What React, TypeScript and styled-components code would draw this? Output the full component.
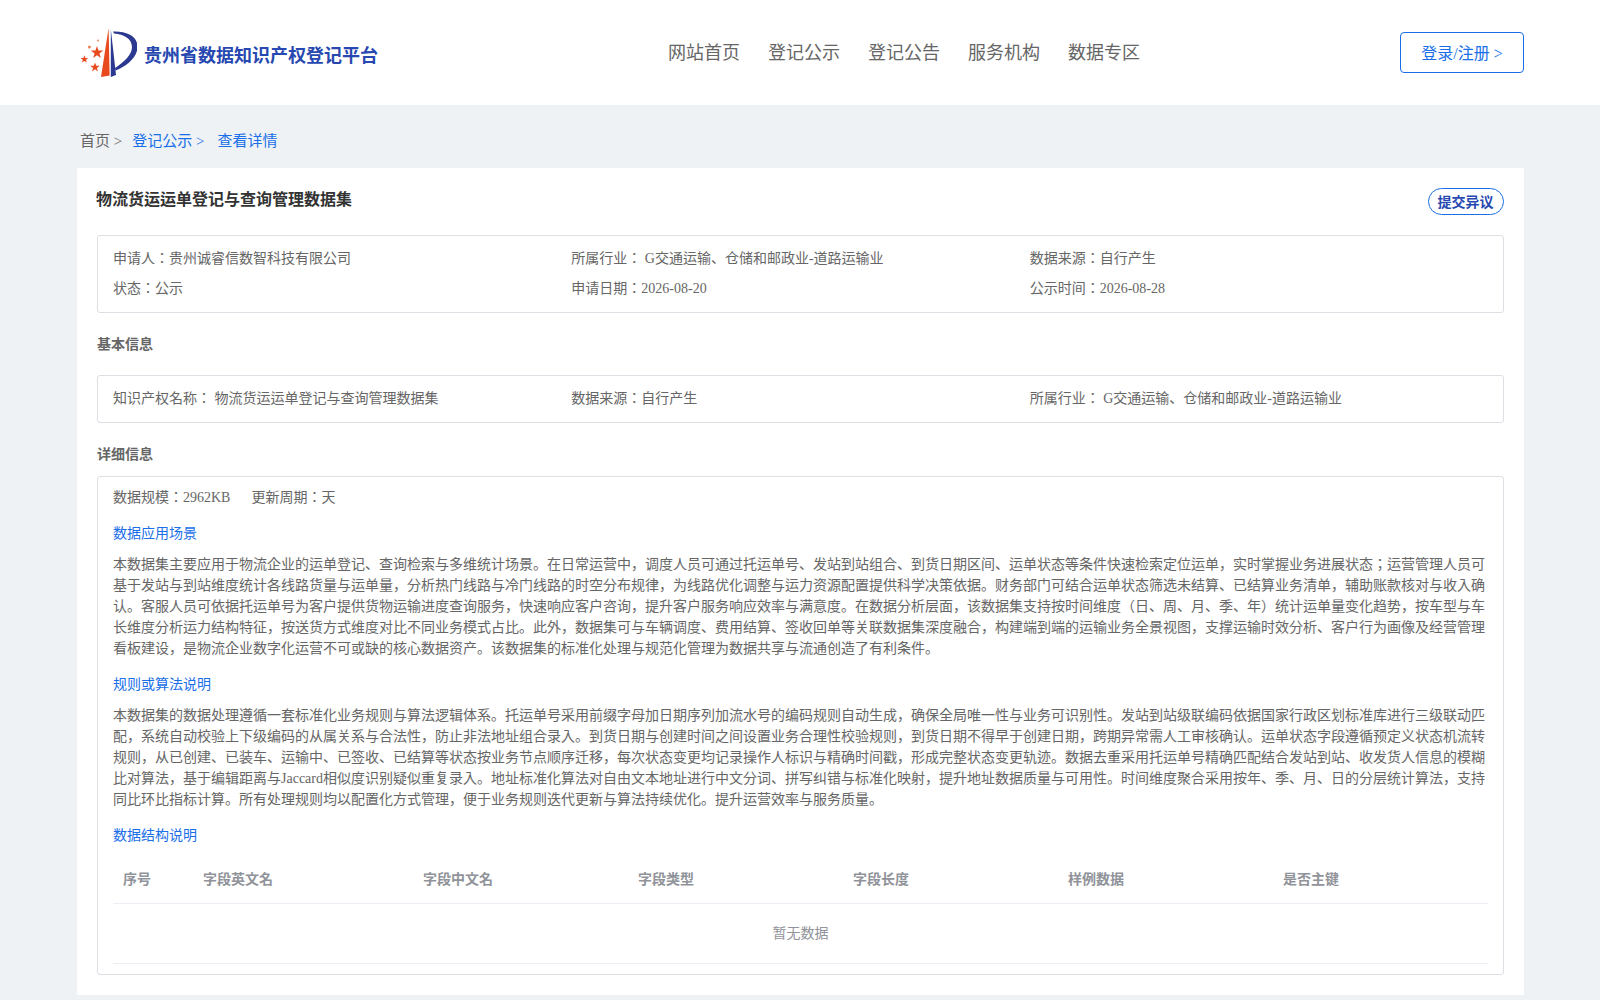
import React from 'react';
import styled, { createGlobalStyle } from 'styled-components';

const GlobalStyle = createGlobalStyle`
  html, body {
    margin: 0;
    padding: 0;
    background: #eef2f5;
    font-family: "Liberation Serif", "Noto Sans CJK JP", serif;
    color: #666;
  }
  * {
    box-sizing: border-box;
  }
`;

const Page = styled.div`
  width: 1600px;
  height: 1000px;
  overflow: hidden;
`;

const Header = styled.header`
  height: 105px;
  background: #fff;
  padding: 0 76px 0 81px;
  display: grid;
  grid-template-columns: 586px 1fr auto;
  align-items: center;
`;

const Brand = styled.div`
  display: flex;
  align-items: center;
  gap: 7px;
`;

const BrandName = styled.div`
  font-size: 18px;
  font-weight: 700;
  color: #2748b0;
  margin-top: 3px;
`;

const Nav = styled.nav`
  display: flex;
  gap: 28px;
  font-size: 18px;
  color: #666;
  margin: 0 0 4px 1px;
`;

const LoginButton = styled.button`
  justify-self: end;
  width: 124px;
  height: 41px;
  padding: 0 0 2px;
  font: inherit;
  font-size: 16px;
  color: #1a6fe8;
  background: #fff;
  border: 1px solid #1a6fe8;
  border-radius: 4px;
`;

const Crumbs = styled.div`
  height: 63px;
  padding: 27px 0 0 80px;
  font-size: 15px;
  line-height: 18px;
  display: flex;
`;

const Crumb = styled.span<{ $active?: boolean; $gap: number }>`
  color: ${p => (p.$active ? '#1a6fe8' : '#666')};
  margin-right: ${p => p.$gap}px;
`;

const Card = styled.main`
  width: 1447px;
  height: 827px;
  margin-left: 77px;
  background: #fff;
  padding: 20px;
`;

const TitleRow = styled.div`
  display: flex;
  justify-content: space-between;
  align-items: flex-start;
  height: 47px;
`;

const Title = styled.h1`
  margin: 0 0 0 -1px;
  font-size: 16px;
  line-height: 24px;
  font-weight: 700;
  color: #333;
`;

const ObjectionButton = styled.button`
  width: 76px;
  height: 27px;
  padding: 0 1px 1px 0;
  font: inherit;
  font-size: 14px;
  font-weight: 700;
  color: #2748b0;
  background: #fff;
  border: 1px solid #1a6fe8;
  border-radius: 14px;
`;

const InfoBox = styled.section`
  border: 1px solid #dcdfe3;
  border-radius: 3px;
  padding: 8px 15px;
  display: grid;
  grid-template-columns: repeat(3, 1fr);
  font-size: 14px;
  line-height: 30px;
`;

const SectionTitle = styled.h2<{ $height: number }>`
  margin: 0;
  height: ${p => p.$height}px;
  padding-top: 21px;
  font-size: 14px;
  line-height: 22px;
  font-weight: 700;
  color: #666;
`;

const DetailBox = styled.section`
  border: 1px solid #dcdfe3;
  border-radius: 3px;
  padding: 10px 15px 10px;
  font-size: 14px;
`;

const Stats = styled.div`
  display: flex;
  gap: 21px;
  line-height: 21px;
`;

const SubTitle = styled.h3`
  margin: 15px 0 10px;
  font-size: 14px;
  line-height: 21px;
  font-weight: 400;
  color: #1a6fe8;
`;

const Paragraph = styled.p`
  margin: 0;
  font-size: 14px;
  line-height: 21px;
  color: #666;
`;

const TableHead = styled.div`
  display: grid;
  grid-template-columns: 80px 220px repeat(5, 1fr);
  height: 51px;
  margin-top: -3px;
  align-items: center;
  border-bottom: 1px solid #ebeef5;
  font-weight: 700;
  color: #909399;
`;

const HeadCell = styled.div`
  padding-left: 10px;
`;

const EmptyRow = styled.div`
  height: 60px;
  line-height: 60px;
  text-align: center;
  color: #909399;
  border-bottom: 1px solid #ebeef5;
`;

const Logo = () => (
  <svg width="56" height="50" viewBox="0 0 56 50">
    <path d="M27.6 0 L20 49 L28.6 47.6 Z" fill="#e8491d" />
    <path d="M29.8 1 L29.8 49 L35 47 Z" fill="#2b3990" />
    <path
      d="M32 3.5 C46 3 56 8 56.5 18 C57 29 46 38 34.6 42.5 L34 40 C43 34 51 27 51 19 C51 11 43 6 33 5.5 Z"
      fill="#2b3990"
    />
    <polygon points="16,18 17.5,22.6 22.2,22.6 18.4,25.5 19.8,30 16,27.2 12.2,30 13.6,25.5 9.8,22.6 14.5,22.6" fill="#e8491d" />
    <polygon points="3.4,27.2 4.4,30 7.3,30 5,31.8 5.8,34.6 3.4,32.9 1,34.6 1.8,31.8 -0.5,30 2.4,30" fill="#e8491d" />
    <polygon points="14,34.4 15.2,37.8 18.8,37.8 15.9,40 17,43.4 14,41.3 11,43.4 12.1,40 9.2,37.8 12.8,37.8" fill="#e8491d" />
    <circle cx="8.4" cy="19" r="1.6" fill="#ef8a5f" />
    <circle cx="17" cy="12.4" r="1" fill="#ef8a5f" />
  </svg>
);

const navItems = ['网站首页', '登记公示', '登记公告', '服务机构', '数据专区'];
const columns = ['序号', '字段英文名', '字段中文名', '字段类型', '字段长度', '样例数据', '是否主键'];

const App: React.FC = () => {
  return (
    <Page>
      <GlobalStyle />
      <Header>
        <Brand>
          <Logo />
          <BrandName>贵州省数据知识产权登记平台</BrandName>
        </Brand>
        <Nav>
          {navItems.map(item => (
            <span key={item}>{item}</span>
          ))}
        </Nav>
        <LoginButton>登录/注册 &gt;</LoginButton>
      </Header>
      <Crumbs>
        <Crumb $gap={10}>首页 &gt;</Crumb>
        <Crumb $active $gap={13}>登记公示 &gt;</Crumb>
        <Crumb $active $gap={0}>查看详情</Crumb>
      </Crumbs>
      <Card>
        <TitleRow>
          <Title>物流货运运单登记与查询管理数据集</Title>
          <ObjectionButton>提交异议</ObjectionButton>
        </TitleRow>
        <InfoBox>
          <div>申请人：贵州诚睿信数智科技有限公司</div>
          <div>所属行业： G交通运输、仓储和邮政业-道路运输业</div>
          <div>数据来源：自行产生</div>
          <div>状态：公示</div>
          <div>申请日期：2026-08-20</div>
          <div>公示时间：2026-08-28</div>
        </InfoBox>
        <SectionTitle $height={62}>基本信息</SectionTitle>
        <InfoBox>
          <div>知识产权名称： 物流货运运单登记与查询管理数据集</div>
          <div>数据来源：自行产生</div>
          <div>所属行业： G交通运输、仓储和邮政业-道路运输业</div>
        </InfoBox>
        <SectionTitle $height={53}>详细信息</SectionTitle>
        <DetailBox>
          <Stats>
            <span>数据规模：2962KB</span>
            <span>更新周期：天</span>
          </Stats>
          <SubTitle>数据应用场景</SubTitle>
          <Paragraph>
            本数据集主要应用于物流企业的运单登记、查询检索与多维统计场景。在日常运营中，调度人员可通过托运单号、发站到站组合、到货日期区间、运单状态等条件快速检索定位运单，实时掌握业务进展状态；运营管理人员可基于发站与到站维度统计各线路货量与运单量，分析热门线路与冷门线路的时空分布规律，为线路优化调整与运力资源配置提供科学决策依据。财务部门可结合运单状态筛选未结算、已结算业务清单，辅助账款核对与收入确认。客服人员可依据托运单号为客户提供货物运输进度查询服务，快速响应客户咨询，提升客户服务响应效率与满意度。在数据分析层面，该数据集支持按时间维度（日、周、月、季、年）统计运单量变化趋势，按车型与车长维度分析运力结构特征，按送货方式维度对比不同业务模式占比。此外，数据集可与车辆调度、费用结算、签收回单等关联数据集深度融合，构建端到端的运输业务全景视图，支撑运输时效分析、客户行为画像及经营管理看板建设，是物流企业数字化运营不可或缺的核心数据资产。该数据集的标准化处理与规范化管理为数据共享与流通创造了有利条件。
          </Paragraph>
          <SubTitle>规则或算法说明</SubTitle>
          <Paragraph>
            本数据集的数据处理遵循一套标准化业务规则与算法逻辑体系。托运单号采用前缀字母加日期序列加流水号的编码规则自动生成，确保全局唯一性与业务可识别性。发站到站级联编码依据国家行政区划标准库进行三级联动匹配，系统自动校验上下级编码的从属关系与合法性，防止非法地址组合录入。到货日期与创建时间之间设置业务合理性校验规则，到货日期不得早于创建日期，跨期异常需人工审核确认。运单状态字段遵循预定义状态机流转规则，从已创建、已装车、运输中、已签收、已结算等状态按业务节点顺序迁移，每次状态变更均记录操作人标识与精确时间戳，形成完整状态变更轨迹。数据去重采用托运单号精确匹配结合发站到站、收发货人信息的模糊比对算法，基于编辑距离与Jaccard相似度识别疑似重复录入。地址标准化算法对自由文本地址进行中文分词、拼写纠错与标准化映射，提升地址数据质量与可用性。时间维度聚合采用按年、季、月、日的分层统计算法，支持同比环比指标计算。所有处理规则均以配置化方式管理，便于业务规则迭代更新与算法持续优化。提升运营效率与服务质量。
          </Paragraph>
          <SubTitle>数据结构说明</SubTitle>
          <TableHead>
            {columns.map(col => (
              <HeadCell key={col}>{col}</HeadCell>
            ))}
          </TableHead>
          <EmptyRow>暂无数据</EmptyRow>
        </DetailBox>
      </Card>
    </Page>
  );
};

export default App;
